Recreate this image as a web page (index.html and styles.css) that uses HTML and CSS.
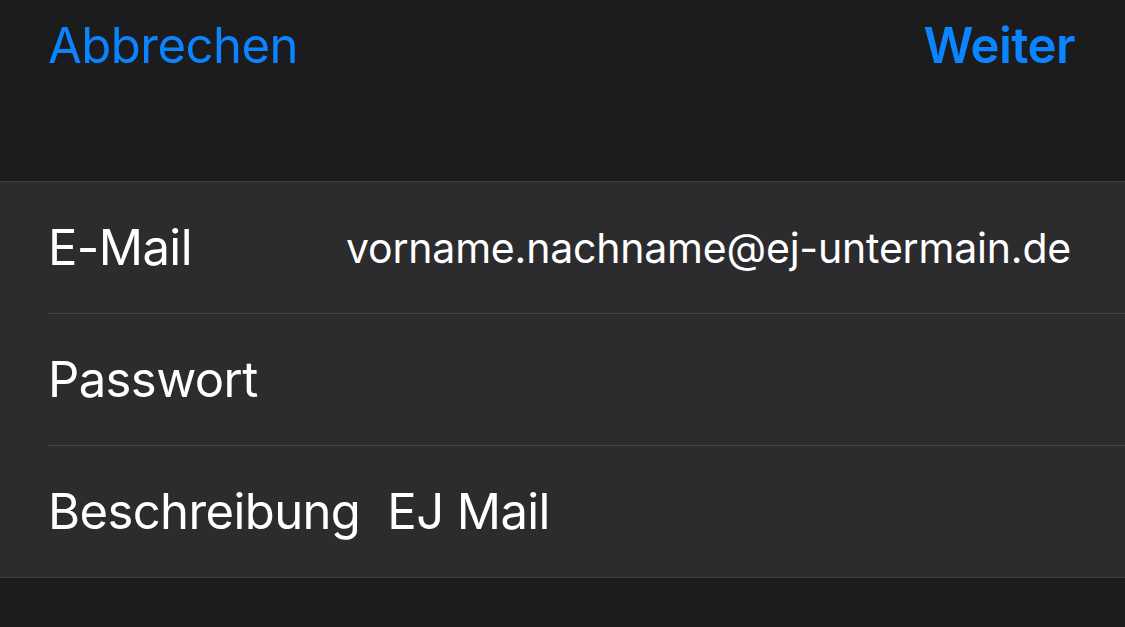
FILE: index.html
```html
<!DOCTYPE html>
<html lang="de">
<head>
    <meta charset="UTF-8">
    <meta name="viewport" content="width=device-width, initial-scale=1.0">
    <title>Mail-Account</title>
    <link rel="stylesheet" href="styles.css">
</head>
<body>
    <div class="navbar">
        <a class="nav-btn" href="#">Abbrechen</a>
        <a class="nav-btn nav-btn-bold" href="#">Weiter</a>
    </div>

    <!-- Account fields -->
    <div class="form-group">
        <div class="row">
            <span class="label">E-Mail</span>
            <span class="value value-email">vorname.nachname@ej-untermain.de</span>
        </div>
        <div class="row">
            <span class="label">Passwort</span>
            <span class="value"></span>
        </div>
        <div class="row">
            <span class="label">Beschreibung</span>
            <span class="value">EJ Mail</span>
        </div>
    </div>
</body>
</html>
```

FILE: styles.css
```css
body {
    margin: 0;
    background-color: #1c1c1e;
    font-family: Inter, "Noto Sans", sans-serif;
    color: #fff;
    height: 627px;
    overflow: hidden;
}
.navbar {
    display: flex;
    justify-content: space-between;
    align-items: center;
    height: 90px;
    padding: 0 50px 0 48px;
    margin-bottom: 91px;
}
.nav-btn {
    color: #0a84ff;
    text-decoration: none;
    font-size: 49px;
    letter-spacing: -0.5px;
}
.nav-btn-bold {
    font-weight: 600;
}
.form-group {
    background-color: #2c2c2e;
    border-top: 1px solid #3c3c3f;
    border-bottom: 1px solid #3c3c3f;
    padding-left: 48px;
}
.row {
    display: flex;
    align-items: center;
    height: 131px;
    padding-right: 54px;
    border-bottom: 1px solid #444447;
    font-size: 49px;
    letter-spacing: -0.6px;
}
.row:last-child {
    border-bottom: none;
}
.label {
    white-space: nowrap;
}
.value {
    flex: 1;
    margin-left: 27px;
    white-space: nowrap;
}
.value-email {
    text-align: right;
    font-size: 41px;
    letter-spacing: -0.2px;
}
```
